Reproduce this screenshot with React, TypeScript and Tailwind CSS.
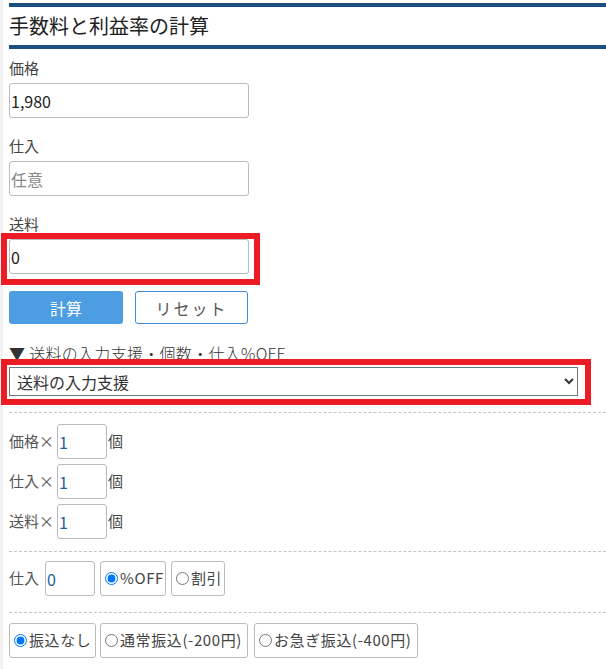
import { useState } from 'react';

const font = "font-['Noto_Sans_CJK_JP','Noto_Sans',sans-serif]";

function Field({ label, value, placeholder, marked }: { label: string; value?: string; placeholder?: string; marked?: boolean }) {
  return (
    <div className="flex flex-col">
      <label className="h-[20px] text-[15px] leading-[20px] text-[#444]">{label}</label>
      <div className="relative mt-[5px]">
        <input
          defaultValue={value}
          placeholder={placeholder}
          className="h-[35px] w-[240px] rounded-[3px] border border-[#bbb] px-[1px] text-[16px] text-[#222] placeholder:text-[#888] outline-none"
        />
        {marked && (
          <div className="pointer-events-none absolute left-[-8px] top-[-6px] h-[52px] w-[259px] border-[6px] border-[#ed1c24]" />
        )}
      </div>
    </div>
  );
}

function CountRow({ label }: { label: string }) {
  return (
    <div className="flex h-[35px] items-center">
      <span className="w-[48px] text-[15px] text-[#555]">{label}×</span>
      <input
        defaultValue="1"
        className="h-[35px] w-[50px] rounded-[3px] border border-[#bbb] px-[1px] text-[16px] text-[#1d5f96] outline-none"
      />
      <span className="ml-[1px] text-[15px] text-[#444]">個</span>
    </div>
  );
}

function RadioBtn({ name, label, checked, onChange, width }: { name: string; label: string; checked: boolean; onChange: () => void; width: string }) {
  return (
    <label className={`${width} flex h-[35px] shrink-0 cursor-pointer items-center gap-[2px] rounded-[3px] border border-[#bbb] pl-[4px] text-[15px] tracking-[0.6px] text-[#444]`}>
      <input type="radio" name={name} checked={checked} onChange={onChange} className="m-0 h-[13px] w-[13px] shrink-0" />
      {label}
    </label>
  );
}

export default function App() {
  const [off, setOff] = useState('off');
  const [fee, setFee] = useState('none');

  return (
    <div className={`${font} min-h-[669px] w-[606px] border-l-[3px] border-[#f2f2f2] bg-white pl-[6px]`}>
      <div className="pt-[3px]">
        <div className="h-[4px] bg-[#1b4f80]" />
        <h2 className="flex h-[38px] items-center text-[20px] font-normal text-[#222]">手数料と利益率の計算</h2>
        <div className="h-[4px] bg-[#1b4f80]" />
      </div>

      <div className="mt-[9px] flex flex-col gap-[18px]">
        <Field label="価格" value="1,980" />
        <Field label="仕入" placeholder="任意" />
        <Field label="送料" value="0" marked />
      </div>

      <div className="mt-[17px] flex gap-[12px]">
        <button className="h-[33px] w-[114px] rounded-[3px] bg-[#4d9de2] text-[16px] text-white">計算</button>
        <button className="h-[33px] w-[113px] rounded-[3px] border border-[#3f8ad8] bg-white text-[16px] tracking-[2px] text-[#555]">リセット</button>
      </div>

      <div className="mt-[18px] h-[22px] text-[16px] font-light leading-[22px] tracking-[0.3px] text-[#333]">▼ 送料の入力支援・個数・仕入%OFF</div>

      <div className="relative mt-[3px] w-[569px]">
        <select className="h-[29px] w-[569px] border border-[#767676] bg-white pl-[3px] text-[16px] text-[#333] outline-none">
          <option>送料の入力支援</option>
          <option>0円</option>
          <option>180円</option>
          <option>370円</option>
        </select>
        <div className="pointer-events-none absolute left-[-8px] top-[-8px] h-[46px] w-[590px] border-[6px] border-[#ed1c24]" />
      </div>

      <div className="mt-[16px] border-t border-dashed border-[#c4c4c4]" />
      <div className="mt-[11px] flex flex-col gap-[5px]">
        <CountRow label="価格" />
        <CountRow label="仕入" />
        <CountRow label="送料" />
      </div>

      <div className="mt-[12px] border-t border-dashed border-[#c4c4c4]" />
      <div className="mt-[9px] flex items-center gap-[5px]">
        <span className="w-[31px] text-[15px] text-[#555]">仕入</span>
        <input
          defaultValue="0"
          className="h-[35px] w-[50px] rounded-[3px] border border-[#bbb] px-[1px] text-[16px] text-[#1d5f96] outline-none"
        />
        <RadioBtn width="w-[66px]" name="off" label="%OFF" checked={off === 'off'} onChange={() => setOff('off')} />
        <RadioBtn width="w-[54px]" name="off" label="割引" checked={off === 'discount'} onChange={() => setOff('discount')} />
      </div>

      <div className="mt-[16px] border-t border-dashed border-[#c4c4c4]" />
      <div className="mt-[10px] flex">
        <RadioBtn width="w-[87px]" name="fee" label="振込なし" checked={fee === 'none'} onChange={() => setFee('none')} />
        <div className="w-[4px]" />
        <RadioBtn width="w-[148px]" name="fee" label="通常振込(-200円)" checked={fee === 'normal'} onChange={() => setFee('normal')} />
        <div className="w-[6px]" />
        <RadioBtn width="w-[164px]" name="fee" label="お急ぎ振込(-400円)" checked={fee === 'rush'} onChange={() => setFee('rush')} />
      </div>
    </div>
  );
}
